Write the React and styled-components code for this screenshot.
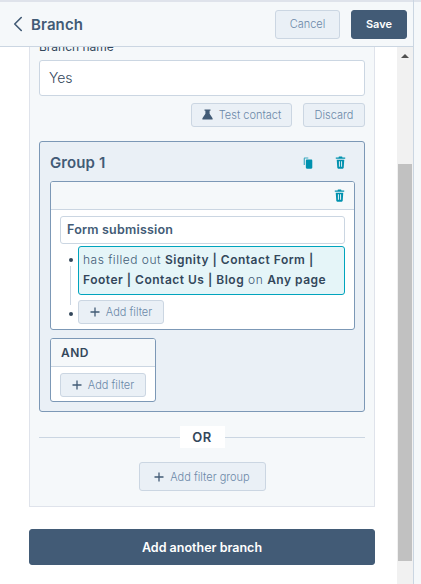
import React from 'react';
import styled, { createGlobalStyle } from 'styled-components';
import { ChevronLeft } from 'lucide-react';

const Global = createGlobalStyle`
  html, body { margin: 0; padding: 0; background: #fff; }
  * { box-sizing: border-box; }
  body { font-family: Inter, "Liberation Sans", sans-serif; color: #33475b; }
`;
const Page = styled.div`width: 421px; height: 584px; overflow: hidden; display: flex; background: #f5f8fa;`;
const Main = styled.div`width: 414px; height: 584px; display: flex; flex-direction: column; border-right: 1px solid #cbd6e2; background: #fff;`;
const Header = styled.header`
  height: 47px; flex: none; display: flex; align-items: center; background: #f5f8fa;
  border-top: 2px solid #dfe3eb; border-bottom: 1px solid #cbd6e2; padding: 0 6px 0 5px;
`;
const BackIcon = styled(ChevronLeft)`color: #425b76; flex: none;`;
const Title = styled.h1`flex: 1; margin: 0; font-size: 15px; font-weight: 600; letter-spacing: .1px; color: #425b76;`;
const Btn = styled.button`
  font-family: inherit; font-size: ${p => p.$fs || 11}px; font-weight: ${p => p.$primary ? 600 : 300};
  letter-spacing: ${p => p.$ls ?? 0}px;
  height: ${p => p.$h}px; width: ${p => p.$w}px; margin-left: ${p => p.$ml || 0}px; padding: 0;
  display: inline-flex; align-items: center; justify-content: center; gap: ${p => p.$gap || 6}px; flex: none;
  border-radius: 3px; border: 1px solid ${p => p.$primary ? '#425b76' : '#cbd6e2'};
  background: ${p => p.$primary ? '#425b76' : '#eaf0f6'};
  color: ${p => p.$primary ? '#fff' : '#6b88a8'};
`;
const Body = styled.div`flex: 1; min-height: 0; display: flex;`;
const Scroller = styled.div`flex: 1; overflow: hidden; padding-left: 29px;`;
const Panel = styled.section`
  width: 346px; margin-top: -13px; padding: 0 9px 15px; height: 473px; background: #f5f8fa;
  border: 1px solid #dfe3eb; border-top: 0; display: flex; flex-direction: column;
`;
const Label = styled.label`font-size: 12px; line-height: 16px; height: 16px; margin-top: 5px; color: #33475b;`;
const Input = styled.div`
  height: 36px; margin-top: 5px; background: #fff; border: 1px solid #cbd6e2; border-radius: 3px;
  padding: 0 9px; display: flex; align-items: center; font-size: 14px; font-weight: 300; color: #33475b;
`;
const Actions = styled.div`display: flex; justify-content: flex-end; gap: 11px; margin-top: 7px;`;
const Group = styled.div`
  margin-top: 14px; height: 273px; background: #eaf0f6; border: 1px solid #7c98b6; border-radius: 3px;
  padding: 0 9px 0 10px; display: flex; flex-direction: column;
`;
const GroupHead = styled.div`height: 39px; display: flex; align-items: center; gap: 22px; padding: 3px 9px 0 0;`;
const GroupTitle = styled.h2`flex: 1; margin: 0; font-size: 15px; font-weight: 600; letter-spacing: .1px; color: #425b76;`;
const Card = styled.div`
  width: ${p => p.$w}px; height: ${p => p.$h}px; background: #fff; border: 1px solid #7c98b6; border-radius: 3px;
  margin-top: ${p => p.$mt || 0}px; overflow: hidden; display: flex; flex-direction: column;
`;
const CardHead = styled.div`
  height: 28px; flex: none; background: #f5f8fa; border-bottom: 1px solid #cbd6e2; display: flex; align-items: center;
  justify-content: ${p => p.$end ? 'flex-end' : 'flex-start'}; padding: 0 ${p => p.$end ? 9 : 10}px;
  font-size: 12px; font-weight: 600; letter-spacing: .4px; color: #33475b;
`;
const CardBody = styled.div`padding: 6px 9px 0; display: flex; flex-direction: column;`;
const Source = styled.div`
  height: 28px; background: #fff; border: 1px solid #cbd6e2; border-radius: 3px; display: flex; align-items: center;
  padding: 0 6px; font-size: 12.5px; font-weight: 600; letter-spacing: .2px; color: #425b76;
`;
const Tree = styled.ul`list-style: none; margin: 2px 0 0; padding: 0 0 0 18px; position: relative;
  &::before { content: ''; position: absolute; left: 10px; top: 20px; height: 39px; width: 1px; background: #cbd6e2; }
`;
const Node = styled.li`position: relative; margin-bottom: 5px;
  &::before { content: ''; position: absolute; left: -9px; top: ${p => p.$dot}px; width: 4px; height: 4px; border-radius: 50%; background: #33475b; }
`;
const Filter = styled.div`
  height: 49px; background: #e5f5f8; border: 1px solid #00a4bd; border-radius: 3px; padding: 3px 4px;
  font-size: 12px; line-height: 20px; letter-spacing: .5px; font-weight: 300; color: #425b76;
  b { font-weight: 600; color: #33475b; }
`;
const OrRow = styled.div`position: relative; height: 22px; margin-top: 14px; display: flex; justify-content: center;
  &::before { content: ''; position: absolute; left: 0; right: 0; top: 11px; height: 1px; background: #cbd6e2; }
`;
const OrLabel = styled.span`position: relative; width: 45px; background: #fff; display: flex; align-items: center; justify-content: center;
  font-size: 13px; font-weight: 600; letter-spacing: .4px; color: #33475b;`;
const Center = styled.div`display: flex; justify-content: center; margin-top: 14px;`;
const Wide = styled.div`margin-top: 22px;`;
const Scrollbar = styled.div`width: 16px; flex: none; background: #f1f1f1; display: flex; flex-direction: column; align-items: center; position: relative;`;
const Arrow = styled.div`margin-top: 7px; width: 0; height: 0; border-left: 4px solid transparent; border-right: 4px solid transparent; border-bottom: 4px solid #505050;`;
const Thumb = styled.div`margin-top: 106px; width: 14px; height: 397px; background: #c1c1c1;`;
const Strip = styled.div`flex: 1; border-top: 2px solid #dfe3eb;`;

const Trash = () => (
  <svg width="11" height="13" viewBox="0 0 14 15" preserveAspectRatio="none" fill="#0091ae" aria-hidden="true">
    <path d="M5 0.5h4l.5 1.3H13v1.5H1V1.8h3.5z" />
    <path fillRule="evenodd" d="M2.2 4.2h9.6l-.7 9.2c-.05.7-.6 1.2-1.3 1.2H4.2c-.7 0-1.25-.5-1.3-1.2zM5 6v6.5h1.2V6zm2.8 0v6.5H9V6z" />
  </svg>
);
const Copy = () => (
  <svg width="10" height="12" viewBox="0 0 14 15" preserveAspectRatio="none" fill="#0091ae" aria-hidden="true">
    <path d="M1 2c0-.8.6-1.4 1.4-1.4h5V2H2.6v8H1z" opacity=".75" />
    <path d="M4 4.6c0-.8.6-1.4 1.4-1.4h6.2c.8 0 1.4.6 1.4 1.4v8.6c0 .8-.6 1.4-1.4 1.4H5.4c-.8 0-1.4-.6-1.4-1.4z" />
  </svg>
);
const Beaker = () => (
  <svg width="11" height="11" viewBox="0 0 11 11" fill="#425b76" aria-hidden="true">
    <path d="M2.5 0.5h6v1.2H7.6v3L10.6 9.2v1.3H.4V9.2l3-4.5v-3h-.9z" />
  </svg>
);
const Plus = () => (
  <svg width="10" height="10" viewBox="0 0 10 10" aria-hidden="true">
    <path d="M5 0.5v9M0.5 5h9" stroke="#425b76" strokeWidth="1.3" fill="none" />
  </svg>
);
const AddFilter = () => (
  <Btn $w={86} $h={24}><Plus />Add filter</Btn>
);

export default function App() {
  return (
    <Page>
      <Global />
      <Main>
        <Header>
          <BackIcon size={26} strokeWidth={1.5} />
          <Title>Branch</Title>
          <Btn $w={65} $h={29}>Cancel</Btn>
          <Btn $primary $w={56} $h={29} $ml={11}>Save</Btn>
        </Header>
        <Body>
          <Scroller>
            <Panel>
              <Label>Branch name</Label>
              <Input>Yes</Input>
              <Actions>
                <Btn $w={101} $h={24}><Beaker />Test contact</Btn>
                <Btn $w={62} $h={24}>Discard</Btn>
              </Actions>
              <Group>
                <GroupHead>
                  <GroupTitle>Group 1</GroupTitle>
                  <Copy />
                  <Trash />
                </GroupHead>
                <Card $w={305} $h={149}>
                  <CardHead $end><Trash /></CardHead>
                  <CardBody>
                    <Source>Form submission</Source>
                    <Tree>
                      <Node $dot={12}>
                        <Filter>has filled out <b>Signity | Contact Form | Footer | Contact Us | Blog</b> on <b>Any page</b></Filter>
                      </Node>
                      <Node $dot={12}><AddFilter /></Node>
                    </Tree>
                  </CardBody>
                </Card>
                <Card $w={106} $h={64} $mt={8}>
                  <CardHead>AND</CardHead>
                  <CardBody><AddFilter /></CardBody>
                </Card>
              </Group>
              <OrRow><OrLabel>OR</OrLabel></OrRow>
              <Center><Btn $w={127} $h={29}><Plus />Add filter group</Btn></Center>
            </Panel>
            <Wide>
              <Btn $primary $w={346} $h={36} $fs={12.5}>Add another branch</Btn>
            </Wide>
          </Scroller>
          <Scrollbar>
            <Arrow />
            <Thumb />
          </Scrollbar>
        </Body>
      </Main>
      <Strip />
    </Page>
  );
}
